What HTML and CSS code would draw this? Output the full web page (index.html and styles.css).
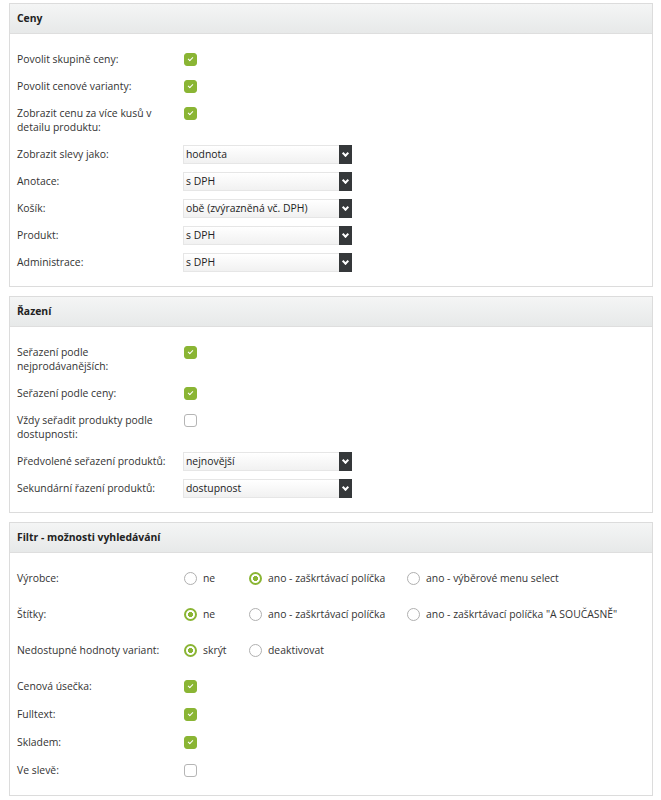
FILE: index.html
```html
<!DOCTYPE html>
<html lang="cs">
<head>
<meta charset="utf-8">
<title>Nastavení</title>
<link rel="stylesheet" href="styles.css">
</head>
<body>
<div class="page">

<section class="panel">
  <header class="panel-head">Ceny</header>
  <div class="panel-body">
    <div class="row"><span class="label">Povolit skupině ceny:</span><span class="ctrl"><span class="cb on"></span></span></div>
    <div class="row"><span class="label">Povolit cenové varianty:</span><span class="ctrl"><span class="cb on"></span></span></div>
    <div class="row"><span class="label">Zobrazit cenu za více kusů v detailu produktu:</span><span class="ctrl"><span class="cb on"></span></span></div>
    <div class="row"><span class="label">Zobrazit slevy jako:</span><span class="ctrl"><span class="select"><span class="val">hodnota</span><span class="arrow"></span></span></span></div>
    <div class="row"><span class="label">Anotace:</span><span class="ctrl"><span class="select"><span class="val">s DPH</span><span class="arrow"></span></span></span></div>
    <div class="row"><span class="label">Košík:</span><span class="ctrl"><span class="select"><span class="val">obě (zvýrazněná vč. DPH)</span><span class="arrow"></span></span></span></div>
    <div class="row"><span class="label">Produkt:</span><span class="ctrl"><span class="select"><span class="val">s DPH</span><span class="arrow"></span></span></span></div>
    <div class="row"><span class="label">Administrace:</span><span class="ctrl"><span class="select"><span class="val">s DPH</span><span class="arrow"></span></span></span></div>
  </div>
</section>

<section class="panel">
  <header class="panel-head">Řazení</header>
  <div class="panel-body">
    <div class="row"><span class="label">Seřazení podle nejprodávanějších:</span><span class="ctrl"><span class="cb on"></span></span></div>
    <div class="row"><span class="label">Seřazení podle ceny:</span><span class="ctrl"><span class="cb on"></span></span></div>
    <div class="row"><span class="label">Vždy seřadit produkty podle dostupnosti:</span><span class="ctrl"><span class="cb"></span></span></div>
    <div class="row"><span class="label">Předvolené seřazení produktů:</span><span class="ctrl"><span class="select"><span class="val">nejnovější</span><span class="arrow"></span></span></span></div>
    <div class="row"><span class="label">Sekundární řazení produktů:</span><span class="ctrl"><span class="select"><span class="val">dostupnost</span><span class="arrow"></span></span></span></div>
  </div>
</section>

<section class="panel">
  <header class="panel-head">Filtr - možnosti vyhledávání</header>
  <div class="panel-body">
    <div class="row radio-row"><span class="label">Výrobce:</span>
      <span class="options">
        <span class="opt"><span class="rb"></span>ne</span>
        <span class="opt"><span class="rb on"></span>ano - zaškrtávací políčka</span>
        <span class="opt"><span class="rb"></span>ano - výběrové menu select</span>
      </span>
    </div>
    <div class="row radio-row"><span class="label">Štítky:</span>
      <span class="options">
        <span class="opt"><span class="rb on"></span>ne</span>
        <span class="opt"><span class="rb"></span>ano - zaškrtávací políčka</span>
        <span class="opt"><span class="rb"></span>ano - zaškrtávací políčka "A SOUČASNĚ"</span>
      </span>
    </div>
    <div class="row radio-row"><span class="label">Nedostupné hodnoty variant:</span>
      <span class="options">
        <span class="opt"><span class="rb on"></span>skrýt</span>
        <span class="opt"><span class="rb"></span>deaktivovat</span>
      </span>
    </div>
    <div class="row loose"><span class="label">Cenová úsečka:</span><span class="ctrl"><span class="cb on"></span></span></div>
    <div class="row loose"><span class="label">Fulltext:</span><span class="ctrl"><span class="cb on"></span></span></div>
    <div class="row loose"><span class="label">Skladem:</span><span class="ctrl"><span class="cb on"></span></span></div>
    <div class="row loose"><span class="label">Ve slevě:</span><span class="ctrl"><span class="cb"></span></span></div>
  </div>
</section>

</div>
</body>
</html>
```

FILE: styles.css
```css
html, body {
  margin: 0;
  padding: 0;
  background: #ffffff;
}

body {
  font-family: "Open Sans", "Liberation Sans", sans-serif;
  font-size: 10.4px;
  color: #333333;
}

.page {
  padding: 3px 8px 0 9px;
  display: flex;
  flex-direction: column;
  gap: 9px;
}

.panel {
  border: 1px solid #dcdcdc;
  background: #ffffff;
}

.panel-head {
  height: 29px;
  line-height: 29px;
  padding-left: 7px;
  font-weight: 700;
  color: #222222;
  background: linear-gradient(#f4f5f5, #e7e9e9);
  border-bottom: 1px solid #dedede;
}

.panel-body {
  padding: 12px 0 10px 7px;
}

.row {
  display: grid;
  grid-template-columns: 167px 1fr;
  padding: 6px 0 7px;
  line-height: 14px;
}

.row.loose {
  padding: 6px 0 8px;
}

.radio-row {
  padding: 6px 0 16px;
}

.label {
  padding-right: 12px;
}

.ctrl {
  display: flex;
  align-items: flex-start;
}

.cb {
  box-sizing: border-box;
  width: 13px;
  height: 13px;
  margin-top: 1px;
  border: 1px solid #b5b5b5;
  border-radius: 3px;
  background: #ffffff;
  position: relative;
}

.cb.on {
  border-color: #8ab534;
  background: #8ab534;
}

.cb.on::after {
  content: "";
  position: absolute;
  left: 3px;
  top: 3px;
  width: 4px;
  height: 2px;
  border-left: 1.5px solid #ffffff;
  border-bottom: 1.5px solid #ffffff;
  transform: rotate(-45deg);
}

.select {
  display: flex;
  width: 169px;
  height: 19px;
  margin: -2px 0 -3px -1px;
  box-sizing: border-box;
  border: 1px solid #e6e6e6;
  background: linear-gradient(#ffffff, #f1f1f1);
}

.val {
  flex: 1;
  padding-left: 2px;
  line-height: 17px;
  color: #222222;
}

.arrow {
  width: 13px;
  margin: -1px -1px -1px 0;
  background: #35383a;
  position: relative;
}

.arrow::after {
  content: "";
  position: absolute;
  left: 4px;
  top: 6px;
  width: 3px;
  height: 3px;
  border-right: 2px solid #ffffff;
  border-bottom: 2px solid #ffffff;
  transform: rotate(45deg);
}

.options {
  display: grid;
  grid-template-columns: 65px 158px auto;
}

.opt {
  display: flex;
  align-items: center;
  gap: 6px;
  white-space: nowrap;
}

.rb {
  box-sizing: border-box;
  width: 13px;
  height: 13px;
  border-radius: 50%;
  border: 1px solid #b0b0b0;
  background: #ffffff;
  flex: none;
}

.rb.on {
  border: 2px solid #8ab534;
  background: radial-gradient(circle, #8ab534 0 2.3px, #ffffff 2.8px);
}
```
